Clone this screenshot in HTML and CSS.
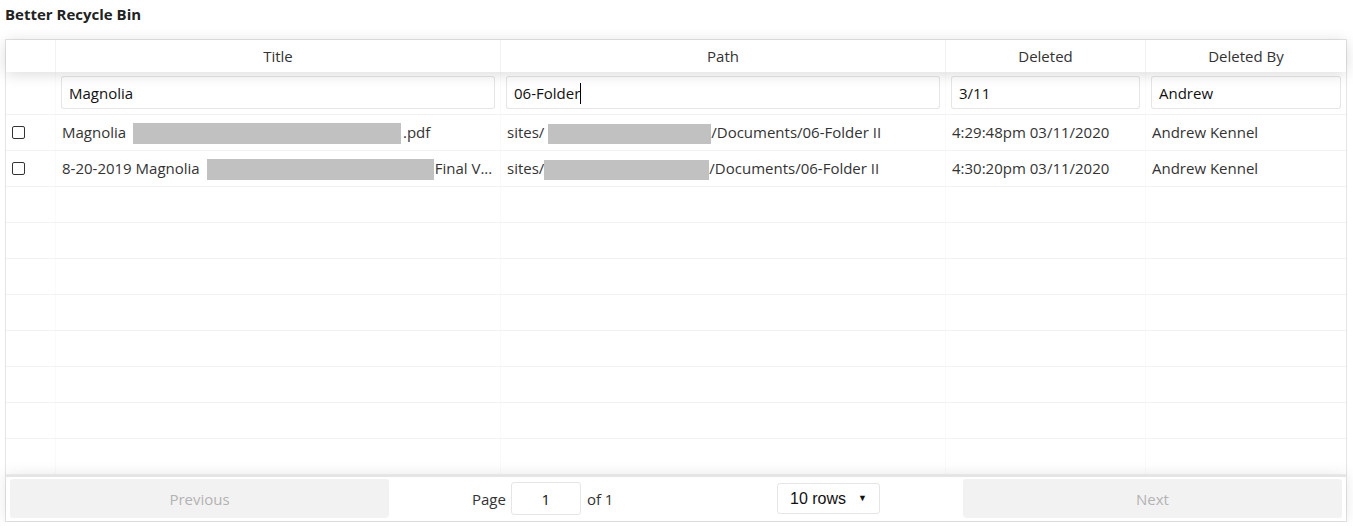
FILE: index.html
```html
<!DOCTYPE html>
<html>
<head>
<meta charset="utf-8">
<link rel="stylesheet" href="styles.css">
</head>
<body>
<div class="app">
  <div class="app-title">Better Recycle Bin</div>
  <div class="table">
    <div class="thead">
      <div class="tr">
        <div class="th c-sel"></div>
        <div class="th c-title">Title</div>
        <div class="th c-path">Path</div>
        <div class="th c-del">Deleted</div>
        <div class="th c-by">Deleted By</div>
      </div>
    </div>
    <div class="tfilter">
      <div class="tr">
        <div class="tf c-sel"></div>
        <div class="tf c-title"><div class="finput">Magnolia</div></div>
        <div class="tf c-path"><div class="finput">06-Folder<span class="caret"></span></div></div>
        <div class="tf c-del"><div class="finput">3/11</div></div>
        <div class="tf c-by"><div class="finput">Andrew</div></div>
      </div>
    </div>
    <div class="tbody">
      <div class="tr">
        <div class="td c-sel"><span class="chk"></span></div>
        <div class="td c-title">Magnolia <span class="redact r1"></span>.pdf</div>
        <div class="td c-path">sites/ <span class="redact r3"></span>/Documents/06-Folder II</div>
        <div class="td c-del">4:29:48pm 03/11/2020</div>
        <div class="td c-by">Andrew Kennel</div>
      </div>
      <div class="tr">
        <div class="td c-sel"><span class="chk"></span></div>
        <div class="td c-title">8-20-2019 Magnolia<span class="redact r2"></span>Final V...</div>
        <div class="td c-path">sites/<span class="redact r4"></span>/Documents/06-Folder II</div>
        <div class="td c-del">4:30:20pm 03/11/2020</div>
        <div class="td c-by">Andrew Kennel</div>
      </div>
      <div class="tr"><div class="td c-sel"></div><div class="td c-title"></div><div class="td c-path"></div><div class="td c-del"></div><div class="td c-by"></div></div>
      <div class="tr"><div class="td c-sel"></div><div class="td c-title"></div><div class="td c-path"></div><div class="td c-del"></div><div class="td c-by"></div></div>
      <div class="tr"><div class="td c-sel"></div><div class="td c-title"></div><div class="td c-path"></div><div class="td c-del"></div><div class="td c-by"></div></div>
      <div class="tr"><div class="td c-sel"></div><div class="td c-title"></div><div class="td c-path"></div><div class="td c-del"></div><div class="td c-by"></div></div>
      <div class="tr"><div class="td c-sel"></div><div class="td c-title"></div><div class="td c-path"></div><div class="td c-del"></div><div class="td c-by"></div></div>
      <div class="tr"><div class="td c-sel"></div><div class="td c-title"></div><div class="td c-path"></div><div class="td c-del"></div><div class="td c-by"></div></div>
      <div class="tr"><div class="td c-sel"></div><div class="td c-title"></div><div class="td c-path"></div><div class="td c-del"></div><div class="td c-by"></div></div>
      <div class="tr"><div class="td c-sel"></div><div class="td c-title"></div><div class="td c-path"></div><div class="td c-del"></div><div class="td c-by"></div></div>
    </div>
    <div class="pagination">
      <div class="pg-prev"><div class="pg-btn">Previous</div></div>
      <div class="pg-center">
        <div class="pg-info">Page <div class="pg-input">1</div> of 1</div>
        <div class="pg-size"><div class="pg-select">10 rows<span class="tri">&#9660;</span></div></div>
      </div>
      <div class="pg-next"><div class="pg-btn">Next</div></div>
    </div>
  </div>
</div>
</body>
</html>
```
FILE: styles.css
```css
* { box-sizing: border-box; }
html, body { margin: 0; padding: 0; background: #fff; }
body {
  font-family: "Open Sans", "Noto Sans", sans-serif;
  font-size: 15px;
  color: #333;
}
.app { padding: 0 6px 0 5px; }
.app-title {
  font-weight: 700;
  font-size: 15px;
  color: #222;
  height: 39px;
  line-height: 29px;
  padding-left: 0;
}
.table {
  width: 1342px;
  border: 1px solid rgba(0,0,0,0.1);
  display: flex;
  flex-direction: column;
  position: relative;
}
.tr { display: flex; }
.c-sel { width: 50px; flex: 0 0 50px; }
.c-title { width: 445px; flex: 0 0 445px; }
.c-path { width: 445px; flex: 0 0 445px; }
.c-del { width: 200px; flex: 0 0 200px; }
.c-by { flex: 1 1 auto; }
.thead {
  box-shadow: 0 2px 15px 0 rgba(0,0,0,0.15);
  position: relative;
  z-index: 1;
  background: #fff;
}
.th {
  height: 32px;
  line-height: 33px;
  text-align: center;
  border-right: 1px solid rgba(0,0,0,0.05);
  color: #333;
}
.th:last-child, .tf:last-child, .td:last-child { border-right: 0; }
.tfilter { border-bottom: 1px solid rgba(0,0,0,0.05); }
.tf {
  height: 42px;
  padding: 4px 5px 5px 5px;
  border-right: 1px solid rgba(0,0,0,0.02);
}
.finput {
  height: 33px;
  border: 1px solid rgba(0,0,0,0.1);
  border-radius: 3px;
  padding: 0 7px;
  line-height: 32px;
  font-size: 15px;
  color: #111;
  background: #fff;
  white-space: nowrap;
}
.caret {
  display: inline-block;
  width: 1px;
  height: 21px;
  background: #000;
  vertical-align: -5px;
}
.tbody .tr { height: 36px; border-bottom: 1px solid rgba(0,0,0,0.05); }
.td {
  padding: 0 6px;
  line-height: 35px;
  border-right: 1px solid rgba(0,0,0,0.02);
  white-space: nowrap;
  overflow: hidden;
  color: #333;
}
.chk {
  display: inline-block;
  width: 13px;
  height: 13px;
  border: 1px solid #333;
  border-radius: 2px;
  vertical-align: -1px;
  background: #fff;
}
.redact {
  display: inline-block;
  background: #c1c1c1;
  height: 21px;
  vertical-align: -6px;
}
.r1 { width: 268px; margin-left: 3px; margin-right: 2px; }
.r2 { width: 227px; margin-left: 7px; margin-right: 1px; }
.r3 { width: 163px; margin-left: 0; height: 20px; }
.r4 { width: 165px; margin-left: 0; height: 20px; }
.pagination {
  display: flex;
  border-top: 2px solid rgba(0,0,0,0.1);
  padding: 2px 3px 3px;
  box-shadow: 0 0 15px 0 rgba(0,0,0,0.1);
  position: relative;
  z-index: 1;
  background: #fff;
  height: 46px;
}
.pg-prev, .pg-next { flex: 1; display: flex; }
.pg-center {
  flex: 1.5;
  display: flex;
  align-items: center;
  justify-content: space-around;
}
.pg-btn {
  flex: 1;
  background: rgba(0,0,0,0.05);
  border-radius: 3px;
  color: #b3b3b3;
  text-align: center;
  line-height: 40px;
  height: 39px;
  font-size: 15px;
  margin: 0 1px;
}
.pg-info { display: flex; align-items: center; color: #333; }
.pg-input {
  display: inline-block;
  width: 70px;
  height: 33px;
  line-height: 32px;
  margin: 0 6px 0 5px;
  border: 1px solid rgba(0,0,0,0.1);
  border-radius: 3px;
  text-align: center;
  color: #111;
}
.pg-select {
  width: 103px;
  height: 31px;
  border: 1px solid rgba(0,0,0,0.1);
  border-radius: 3px;
  padding: 0 12px;
  line-height: 29px;
  font-family: "Liberation Sans", Arial, sans-serif;
  font-size: 16px;
  color: #111;
  display: flex;
  justify-content: space-between;
}
.tri { font-size: 9px; }
```
